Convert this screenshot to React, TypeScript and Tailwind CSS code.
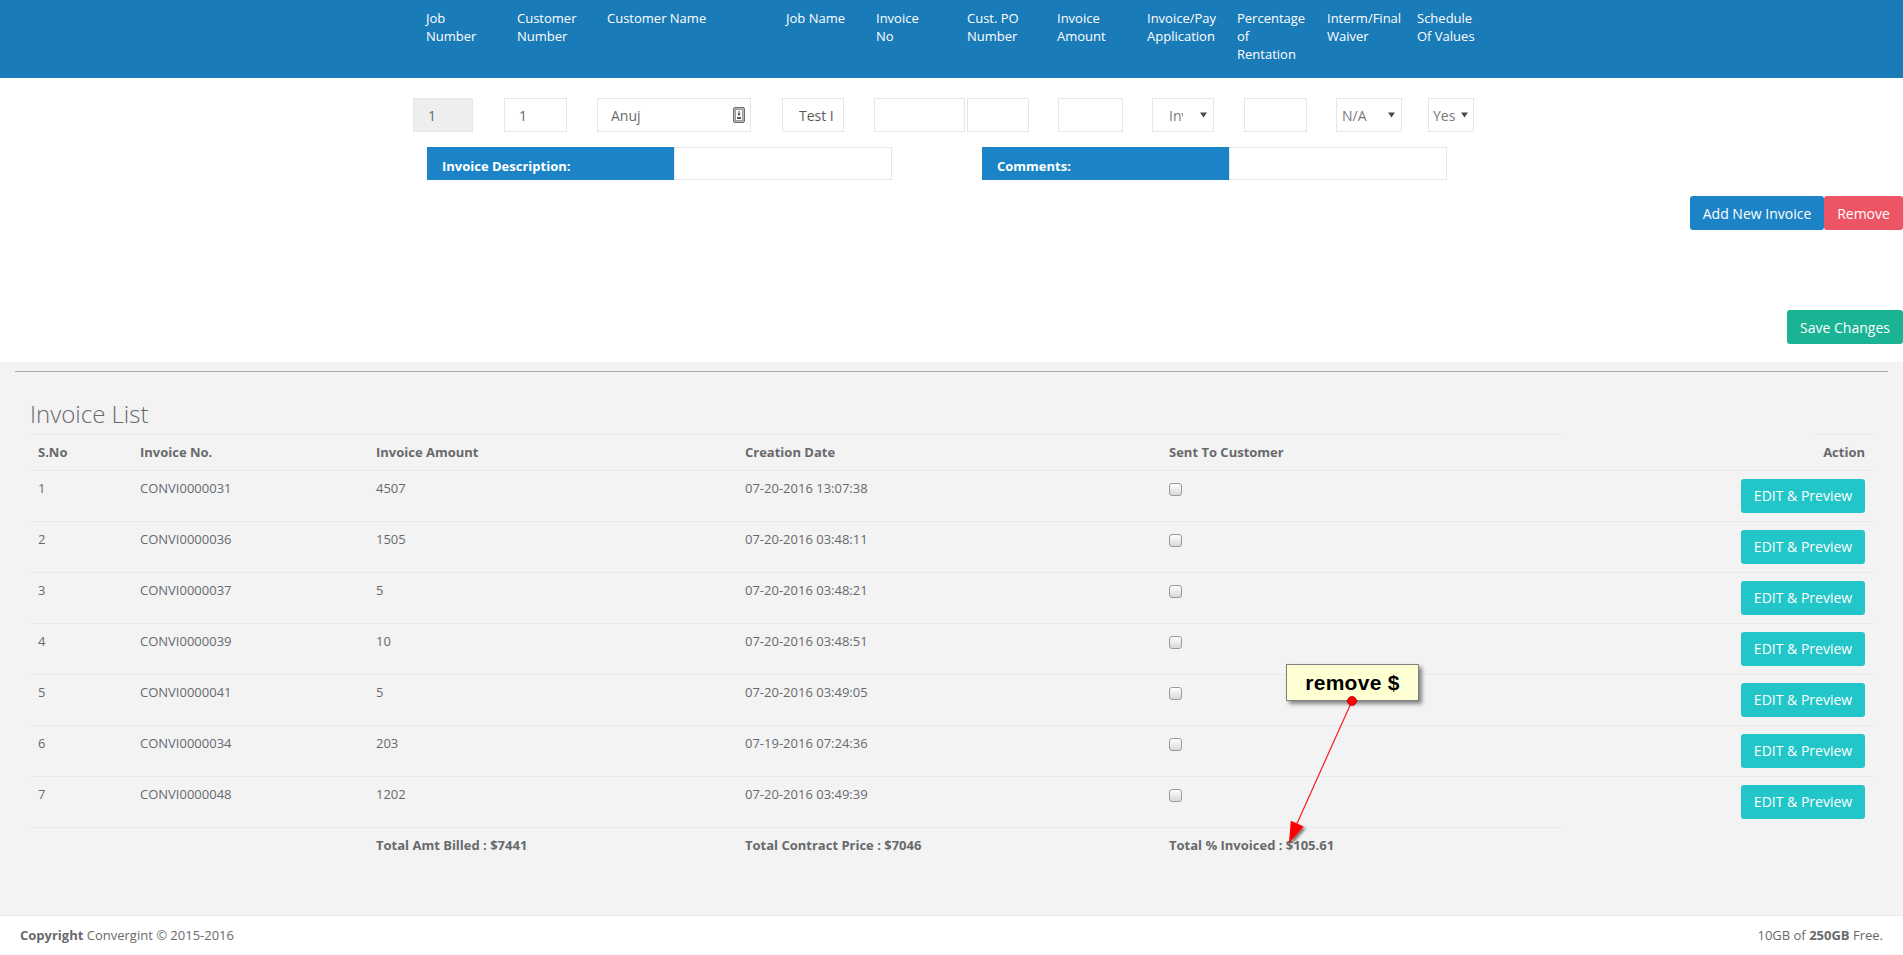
import React from "react";

const rows = [
  ["1", "CONVI0000031", "4507", "07-20-2016 13:07:38"],
  ["2", "CONVI0000036", "1505", "07-20-2016 03:48:11"],
  ["3", "CONVI0000037", "5", "07-20-2016 03:48:21"],
  ["4", "CONVI0000039", "10", "07-20-2016 03:48:51"],
  ["5", "CONVI0000041", "5", "07-20-2016 03:49:05"],
  ["6", "CONVI0000034", "203", "07-19-2016 07:24:36"],
  ["7", "CONVI0000048", "1202", "07-20-2016 03:49:39"],
];

function Arrow() {
  return (
    <svg width="7" height="6" viewBox="0 0 7 6" className="shrink-0">
      <path d="M0 0.5h7L3.5 5.5z" fill="#4a4a4a" />
    </svg>
  );
}

function ContactIcon() {
  return (
    <svg width="12" height="16" viewBox="0 0 12 16" className="shrink-0">
      <rect x="0.5" y="0.5" width="11" height="15" rx="1.5" fill="#b8b8b8" stroke="#6e6e6e" />
      <rect x="2.5" y="2.5" width="7" height="11" fill="#fff" stroke="#8a8a8a" strokeWidth="0.8" />
      <path d="M6 4v3.5" stroke="#555" strokeWidth="1.2" />
      <path d="M4.2 6.8l1.8 2.2 1.8-2.2z" fill="#555" />
      <rect x="4" y="10" width="4" height="2" fill="#555" />
    </svg>
  );
}

const box = "h-[34px] border border-[#e5e6e7] bg-white flex items-center text-[14px] text-[#676a6c] shrink-0";

export default function App() {
  return (
    <div className="relative w-full font-['Open_Sans',sans-serif] text-[13px] text-[#676a6c] bg-white">
      {/* Top header labels */}
      <div className="h-[78px] bg-[#1a7bb9] text-white text-[13px] leading-[18px] pt-[9px] flex pl-[426px]">
        <div className="w-[91px] shrink-0">Job<br />Number</div>
        <div className="w-[90px] shrink-0">Customer<br />Number</div>
        <div className="w-[179px] shrink-0">Customer Name</div>
        <div className="w-[90px] shrink-0">Job Name</div>
        <div className="w-[91px] shrink-0">Invoice<br />No</div>
        <div className="w-[90px] shrink-0">Cust. PO<br />Number</div>
        <div className="w-[90px] shrink-0">Invoice<br />Amount</div>
        <div className="w-[90px] shrink-0 whitespace-nowrap">Invoice/Pay<br />Application</div>
        <div className="w-[90px] shrink-0">Percentage<br />of<br />Rentation</div>
        <div className="w-[90px] shrink-0 whitespace-nowrap">Interm/Final<br />Waiver</div>
        <div className="w-[90px] shrink-0">Schedule<br />Of Values</div>
      </div>

      {/* Input row */}
      <div className="mt-[20px] flex pl-[413px] h-[34px]">
        <div className={`${box} w-[60px] mr-[31px] pl-[14px]`} style={{ backgroundColor: "#eeeeee" }}>1</div>
        <div className={`${box} w-[63px] mr-[30px] pl-[14px]`}>1</div>
        <div className={`${box} w-[154px] mr-[31px] pl-[13px] pr-[5px] justify-between`}>
          <span>Anuj</span>
          <ContactIcon />
        </div>
        <div className={`${box} w-[62px] mr-[30px] pl-[16px]`}>
          <span className="block w-[34px] overflow-hidden whitespace-nowrap text-[#5a5a5a]">Test Invoice</span>
        </div>
        <div className={`${box} w-[91px] mr-[2px]`}></div>
        <div className={`${box} w-[62px] mr-[29px]`}></div>
        <div className={`${box} w-[65px] mr-[29px]`}></div>
        <div className={`${box} w-[62px] mr-[30px] pl-[16px] pr-[6px] justify-between`}>
          <span className="block w-[14px] overflow-hidden whitespace-nowrap text-[#7a7a7a]">Invoice</span>
          <Arrow />
        </div>
        <div className={`${box} w-[63px] mr-[29px]`}></div>
        <div className={`${box} w-[66px] mr-[26px] pl-[5px] pr-[6px] justify-between`}>
          <span className="text-[#7a7a7a]">N/A</span>
          <Arrow />
        </div>
        <div className={`${box} w-[46px] pl-[4px] pr-[5px] justify-between`}>
          <span className="text-[#7a7a7a]">Yes</span>
          <Arrow />
        </div>
      </div>

      {/* Description / comments row */}
      <div className="mt-[15px] flex pl-[427px] h-[33px]">
        <div className="w-[247px] shrink-0 bg-[#1c84c6] text-white font-bold text-[13px] leading-[18px] pl-[15px] pt-[10px]">Invoice Description:</div>
        <div className="w-[218px] shrink-0 mr-[90px] border border-[#e5e6e7] bg-white"></div>
        <div className="w-[247px] shrink-0 bg-[#1c84c6] text-white font-bold text-[13px] leading-[18px] pl-[15px] pt-[10px]">Comments:</div>
        <div className="w-[218px] shrink-0 border border-[#e5e6e7] bg-white"></div>
      </div>

      {/* Buttons */}
      <div className="mt-[16px] flex justify-end h-[34px]">
        <button className="w-[134px] h-[34px] bg-[#1c84c6] text-white text-[14px] rounded-[3px]">Add New Invoice</button>
        <button className="w-[79px] h-[34px] bg-[#ed5565] text-white text-[14px] rounded-[3px]">Remove</button>
      </div>
      <div className="mt-[80px] pb-[18px] flex justify-end">
        <button className="w-[116px] h-[34px] bg-[#1ab394] text-white text-[14px] rounded-[3px]">Save Changes</button>
      </div>

      {/* Gray section */}
      <div className="bg-[#f3f3f4] h-[553px] pt-[9px]">
        <div className="mx-[15px] border-t border-[#a6a6a6]"></div>
        <div className="px-[30px]">
          <div className="mt-[28px] mb-[7px] h-[27px] leading-[27px] text-[24px] font-light text-[#676a6c]">Invoice List</div>

          {/* Header row */}
          <div className="grid grid-cols-[102px_236px_369px_424px_401px_311px] font-bold leading-[18.57px]">
            <div className="border-t border-[#e7eaec] h-[36px] px-[8px] pt-[8px]">S.No</div>
            <div className="border-t border-[#e7eaec] h-[36px] px-[8px] pt-[8px]">Invoice No.</div>
            <div className="border-t border-[#e7eaec] h-[36px] px-[8px] pt-[8px]">Invoice Amount</div>
            <div className="border-t border-[#e7eaec] h-[36px] px-[8px] pt-[8px]">Creation Date</div>
            <div className="border-t border-[#e7eaec] h-[36px] px-[8px] pt-[8px]">Sent To Customer</div>
            <div className="h-[36px] px-[8px] pt-[9px] text-right bg-[linear-gradient(#e7eaec,#e7eaec)] bg-no-repeat bg-[length:58px_1px] bg-[position:right_top]">Action</div>
          </div>

          {rows.map((r) => (
            <div key={r[0]} className="grid grid-cols-[102px_236px_369px_424px_401px_311px] border-t border-[#e7eaec] h-[51px] leading-[18.57px]">
              <div className="px-[8px] pt-[8px]">{r[0]}</div>
              <div className="px-[8px] pt-[8px]">{r[1]}</div>
              <div className="px-[8px] pt-[8px]">{r[2]}</div>
              <div className="px-[8px] pt-[8px]">{r[3]}</div>
              <div className="px-[8px] pt-[12px]">
                <span className="block w-[13px] h-[13px] border border-[#9a9a9a] rounded-[3px] bg-linear-to-b from-white to-[#d8d8d8]"></span>
              </div>
              <div className="px-[8px] pt-[8px] flex justify-end items-start">
                <button className="w-[124px] h-[34px] bg-[#23c6c8] text-white text-[14px] rounded-[3px]">EDIT &amp; Preview</button>
              </div>
            </div>
          ))}

          {/* Footer totals */}
          <div className="grid grid-cols-[102px_236px_369px_424px_401px_311px] font-bold leading-[18.57px]">
            <div className="border-t border-[#e7eaec] h-[36px] px-[8px] pt-[8px]"></div>
            <div className="border-t border-[#e7eaec] h-[36px] px-[8px] pt-[8px]"></div>
            <div className="border-t border-[#e7eaec] h-[36px] px-[8px] pt-[8px]">Total Amt Billed : $7441</div>
            <div className="border-t border-[#e7eaec] h-[36px] px-[8px] pt-[8px]">Total Contract Price : $7046</div>
            <div className="border-t border-[#e7eaec] h-[36px] px-[8px] pt-[8px]">Total % Invoiced : $105.61</div>
            <div></div>
          </div>
        </div>
      </div>

      {/* Page footer */}
      <div className="h-[40px] bg-white border-t border-[#e7eaec] px-[20px] flex items-center justify-between text-[13px] text-[#676a6c]">
        <div><span className="font-bold">Copyright</span> Convergint © 2015-2016</div>
        <div>10GB of <span className="font-bold">250GB</span> Free.</div>
      </div>

      {/* Annotation overlay */}
      <svg className="absolute left-0 top-0 pointer-events-none" width="1903" height="955" viewBox="0 0 1903 955">
        <defs>
          <filter id="sh" x="-50%" y="-50%" width="200%" height="200%">
            <feDropShadow dx="2" dy="2" stdDeviation="1.5" floodColor="#000" floodOpacity="0.55" />
          </filter>
        </defs>
        <line x1="1352" y1="701" x2="1295" y2="828" stroke="#ff1a1a" strokeWidth="1.2" />
        <path d="M1289 843 L1290.8 820.8 L1303.6 826.6 Z" fill="#ff0000" filter="url(#sh)" />
      </svg>
      <div className="absolute left-[1286px] top-[664px] w-[133px] h-[37px] bg-[#ffffd4] border border-[#7f7f7f] shadow-[3px_3px_4px_rgba(0,0,0,0.45)] flex items-center justify-center font-['Liberation_Sans',Arial,sans-serif] font-bold text-[21px] text-black tracking-[0.3px]">
        remove $
      </div>
      <svg className="absolute left-0 top-0 pointer-events-none" width="1903" height="955" viewBox="0 0 1903 955">
        <circle cx="1352" cy="701" r="4.5" fill="#ff0000" stroke="#b00000" strokeWidth="0.8" />
      </svg>
    </div>
  );
}
